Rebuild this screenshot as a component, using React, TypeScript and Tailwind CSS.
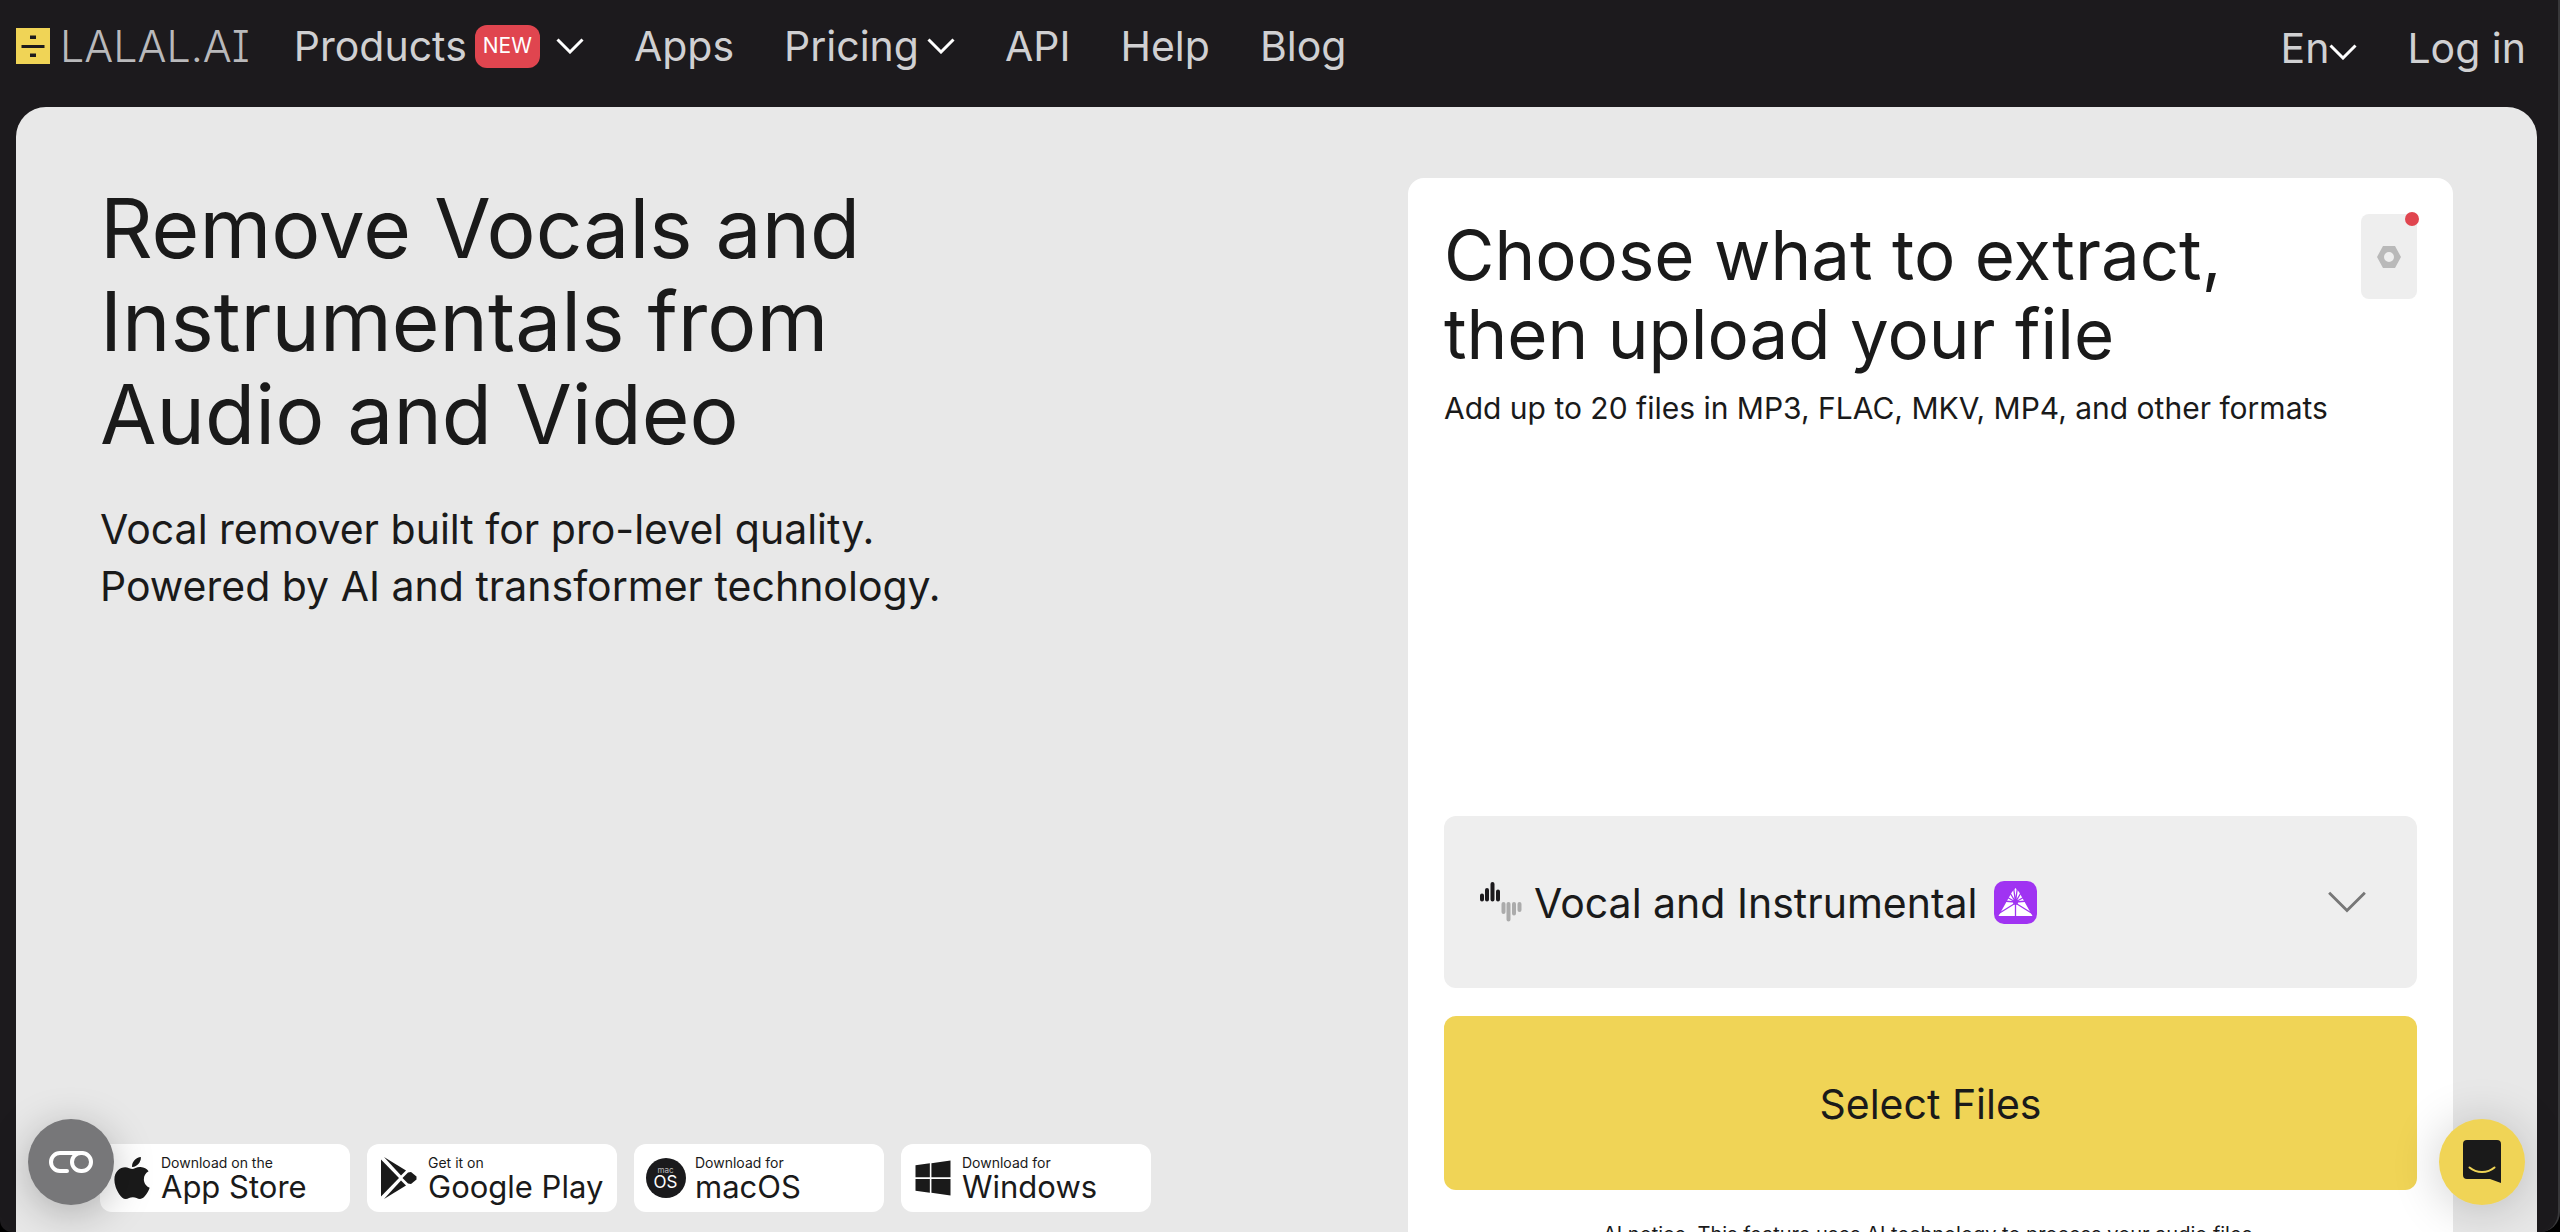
import React from 'react';
import { clsx } from 'clsx';
import { FaApple, FaWindows } from 'react-icons/fa';

interface ChevronProps {
  className?: string;
  strokeWidth?: number;
}

const Chevron: React.FC<ChevronProps> = ({ className, strokeWidth = 3 }) => (
  <svg
    viewBox="0 0 28 16"
    className={clsx('shrink-0', className)}
    fill="none"
    stroke="currentColor"
    strokeWidth={strokeWidth}
    aria-hidden="true"
  >
    <path d="M1.5 1.5 14 14 26.5 1.5" />
  </svg>
);

const Logo: React.FC = () => (
  <a href="#" className="flex items-center gap-[10px] text-[#b9b9bb]">
    <svg viewBox="0 0 34 36" className="h-9 w-[34px] shrink-0" aria-hidden="true">
      <rect width="34" height="36" fill="#f0d456" />
      <path d="M14 7.5h6V11h-6zM5.5 17h23v3h-23zM14 25.5h6V29h-6z" fill="#1c1a1d" />
    </svg>
    <span className="text-[43px] leading-[52px] font-light [font-feature-settings:'cv08']">
      LALAL.AI
    </span>
  </a>
);

const PlayLogo: React.FC = () => (
  <svg viewBox="0 0 36 42" className="h-[42px] w-9" fill="currentColor" aria-hidden="true">
    <path d="M0 2.5v37L18 21z" />
    <path d="M3 0 20 18.500l5-5z" />
    <path d="M3 42 20 23.500l5 5z" />
    <path d="M27 15.500 21.500 21l5.500 5.500 3 .5 5.500-4.500v-3L30 15z" />
  </svg>
);

const MacLogo: React.FC = () => (
  <span className="flex size-10 flex-col items-center justify-center rounded-full bg-[#1a1a1c] text-white">
    <span className="text-[8px] leading-[8px] text-white/70">mac</span>
    <span className="text-[17px] leading-4">OS</span>
  </span>
);

const stores = [
  { note: 'Download on the', name: 'App Store', icon: <FaApple className="size-12" /> },
  { note: 'Get it on', name: 'Google Play', icon: <PlayLogo /> },
  { note: 'Download for', name: 'macOS', icon: <MacLogo /> },
  { note: 'Download for', name: 'Windows', icon: <FaWindows className="size-10" /> },
];

const SplitIcon: React.FC = () => (
  <svg viewBox="0 0 42 40" className="h-10 w-[42px] shrink-0" strokeWidth="4" strokeLinecap="round" aria-hidden="true">
    <path d="M2 13.500v4M7 8v9.500M12.500 2v15.500M18 9.500v8" stroke="#1c1a1d" />
    <path d="M23.500 22v8M28.500 22v15.500M34 22v9.500M39.500 22v6" stroke="#ababab" />
  </svg>
);

const ModelBadge: React.FC = () => (
  <svg viewBox="0 0 43 43" className="size-[43px] shrink-0" aria-hidden="true">
    <rect width="43" height="43" rx="10" fill="#a033f2" />
    <path d="M21.500 7 25 11l13.500 24h-34L18 11z" fill="#fff" />
    <path
      d="M21.500 21 15.500 11M21.500 21 11 15M21.500 21 9 20M21.500 21 27.500 11M21.500 21 32 15M21.500 21 34 20M21.500 21 19.500 6M21.500 21 23.500 6M21.500 22v14M20 23 4 33M23 23 39 33"
      stroke="#a033f2"
      strokeWidth="1.300"
    />
    <circle cx="21.500" cy="21.500" r="2.500" fill="#a033f2" />
  </svg>
);

const Header: React.FC = () => (
  <header className="flex h-[107px] shrink-0 items-start justify-between pt-5 pr-8 pl-4 text-[41px] leading-[52px] text-[#d0d0d2]">
    <div className="flex items-center">
      <Logo />
      <nav className="ml-11 flex items-center gap-[50px]">
        <button type="button" className="flex items-center">
          Products
          <span className="ml-2 flex h-[43px] items-center rounded-xl bg-[#e0454f] px-2 text-[21px] text-white">NEW</span>
          <Chevron className="ml-4 h-4 w-7 text-white" />
        </button>
        <a href="#">Apps</a>
        <button type="button" className="flex items-center">
          Pricing
          <Chevron className="ml-2 h-4 w-7 text-white" />
        </button>
        <a href="#">API</a>
        <a href="#">Help</a>
        <a href="#">Blog</a>
      </nav>
    </div>
    <div className="flex items-center gap-[50px] pt-[2px]">
      <label className="flex items-center">
        <select aria-label="Language" className="appearance-none bg-transparent [field-sizing:content]">
          <option>En</option>
        </select>
        <Chevron className="mt-2 h-4 w-7 text-white" />
      </label>
      <a href="#">Log in</a>
    </div>
  </header>
);

const Hero: React.FC = () => (
  <section className="flex flex-1 flex-col">
    <h1 className="mt-1 text-[82px] leading-[93px]">
      Remove Vocals and
      <br />
      Instrumentals from
      <br />
      Audio and Video
    </h1>
    <p className="mt-10 text-[41px] leading-[57px]">
      Vocal remover built for pro-level quality.
      <br />
      Powered by AI and transformer technology.
    </p>
    <ul className="mt-auto mb-5 flex gap-[17px]">
      {stores.map((store) => (
        <li key={store.name}>
          <a href="#" className="flex h-[68px] w-[250px] items-center rounded-xl bg-white">
            <span className="flex w-[61px] shrink-0 items-center justify-center pl-[2px]">{store.icon}</span>
            <span className="flex flex-col pt-[2px] whitespace-nowrap">
              <span className="text-[14px] leading-4">{store.note}</span>
              <span className="text-[31px] leading-8">{store.name}</span>
            </span>
          </a>
        </li>
      ))}
    </ul>
  </section>
);

const UploadCard: React.FC = () => (
  <section className="flex w-[1045px] shrink-0 flex-col rounded-t-2xl bg-white px-9 pt-9">
    <div className="flex items-start justify-between">
      <h2 className="pt-[2px] text-[69px] leading-[79px]">
        Choose what to extract,
        <br />
        then upload your file
      </h2>
      <button type="button" aria-label="Settings" className="relative flex h-[85px] w-14 items-center justify-center rounded-lg bg-[#eee]">
        <svg viewBox="0 0 24 22" className="h-[22px] w-6" fill="#b9b9b9" fillRule="evenodd" aria-hidden="true">
          <path d="M6 0h12l6 11-6 11H6L0 11zM12 6a5 5 0 1 0 0 10 5 5 0 0 0 0-10z" />
        </svg>
        <span className="absolute -top-[2px] -right-[2px] size-[14px] rounded-full bg-[#e0454f]" />
      </button>
    </div>
    <p className="mt-[14px] text-[30px] leading-10 whitespace-nowrap">
      Add up to 20 files in MP3, FLAC, MKV, MP4, and other formats
    </p>
    <label className="mt-auto flex h-[172px] shrink-0 items-center rounded-xl bg-[#eee] pr-[50px] pl-9">
      <SplitIcon />
      <select aria-label="Stems to extract" className="ml-3 appearance-none bg-transparent pt-[2px] text-[41px] leading-[52px] [field-sizing:content]">
        <option>Vocal and Instrumental</option>
      </select>
      <span className="ml-4">
        <ModelBadge />
      </span>
      <Chevron className="ml-auto h-6 w-10 text-[#777]" strokeWidth={2} />
    </label>
    <button type="button" className="mt-7 h-[174px] shrink-0 rounded-xl bg-[#f0d456] pt-1 text-[41px]">
      Select Files
    </button>
    <p className="mt-8 h-[10px] shrink-0 text-center text-[20px] leading-6">
      AI notice. This feature uses AI technology to process your audio files.
    </p>
  </section>
);

const App: React.FC = () => (
  <div className="h-screen bg-black font-['Inter',sans-serif] text-[#1a1a1a]">
    <div className="flex h-full flex-col overflow-hidden rounded-br-[20px] rounded-bl-xl border-r-2 border-[#38383a] bg-[#1c1a1d]">
      <Header />
      <main className="mr-[21px] ml-4 flex flex-1 rounded-t-[30px] bg-[#e8e8e8] pt-[71px] pr-[84px] pl-[84px]">
        <Hero />
        <UploadCard />
      </main>
    </div>

    <button
      type="button"
      aria-label="Privacy settings"
      className="fixed bottom-[27px] left-7 flex size-[86px] items-center justify-center rounded-full bg-[#777779] shadow-[0_8px_40px_rgba(0,0,0,0.25)]"
    >
      <svg viewBox="0 0 44 22" className="h-[22px] w-11" fill="none" stroke="#fff" strokeWidth="4" strokeLinecap="round" aria-hidden="true">
        <path d="M18 20h-7a9 9 0 0 1 0-18h22" />
        <rect x="23" y="2" width="19" height="18" rx="9" />
      </svg>
    </button>
    <button
      type="button"
      aria-label="Open chat"
      className="fixed right-[35px] bottom-[27px] flex size-[86px] items-center justify-center rounded-full bg-[#f0d456] shadow-[0_4px_50px_rgba(0,0,0,0.2)]"
    >
      <svg viewBox="0 0 38 44" className="h-11 w-[38px]" aria-hidden="true">
        <path d="M4 0h30a4 4 0 0 1 4 4v39l-11-4H4a4 4 0 0 1-4-4V4a4 4 0 0 1 4-4z" fill="#1a1a1a" />
        <path d="M6.500 27.500c7 6 18 6 25 0" fill="none" stroke="#f0d456" strokeWidth="2" strokeLinecap="round" />
      </svg>
    </button>
  </div>
);

export default App;
